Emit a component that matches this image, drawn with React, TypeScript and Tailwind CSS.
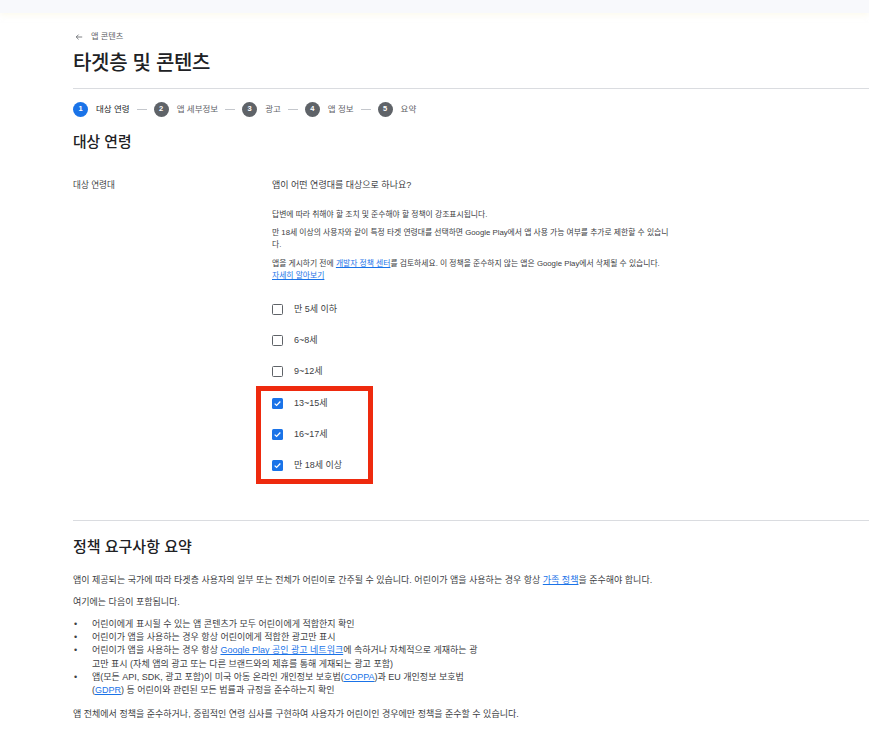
import React from 'react';

const steps = ['대상 연령', '앱 세부정보', '광고', '앱 정보', '요약'];

const ageGroups = [
    { label: '만 5세 이하', checked: false },
    { label: '6~8세', checked: false },
    { label: '9~12세', checked: false },
    { label: '13~15세', checked: true },
    { label: '16~17세', checked: true },
    { label: '만 18세 이상', checked: true },
];

const Checkbox = ({ label, checked }: { label: string; checked: boolean }) => (
    <div className="flex h-[24px] items-center">
        {checked ? (
            <span className="flex h-[11px] w-[11px] items-center justify-center rounded-[1.5px] bg-[#1a73e8]">
                <svg viewBox="0 0 12 12" className="h-[9px] w-[9px]">
                    <path d="M2.2 6.2 L4.8 8.6 L9.8 3.4" fill="none" stroke="white" strokeWidth="1.7" />
                </svg>
            </span>
        ) : (
            <span className="h-[11px] w-[11px] rounded-[1.5px] border-[1.3px] border-[#5f6368] bg-white" />
        )}
        <span className="ml-[11px] text-[9px] leading-[12px] text-[#3c4043]">{label}</span>
    </div>
);

const Link = ({ children }: { children: React.ReactNode }) => (
    <a className="text-[#1a73e8] underline underline-offset-[1px]">{children}</a>
);

export default function App() {
    return (
        <div
            className="min-h-[754px] w-[869px] bg-white text-[#202124]"
            style={{ fontFamily: '"Liberation Sans", "Noto Sans CJK KR", sans-serif' }}
        >
            <div className="h-[13px] bg-[#f8f9fc] shadow-[0_2px_6px_rgba(250,245,220,0.5)]" />

            <div className="pl-[73px]">
                {/* breadcrumb */}
                <div className="mt-[18px] flex h-[12px] items-center gap-[8px] text-[#5f6368]">
                    <svg viewBox="0 0 10 10" className="ml-[2px] h-[8px] w-[8px]">
                        <path d="M9 5 H1.5 M4.5 2 L1.5 5 L4.5 8" fill="none" stroke="#5f6368" strokeWidth="1" />
                    </svg>
                    <span className="text-[8.2px] leading-[12px]">앱 콘텐츠</span>
                </div>

                <h1 className="mt-[8px] text-[20px] font-medium leading-[24px] tracking-[-0.3px] text-[#202124]">
                    타겟층 및 콘텐츠
                </h1>

                <div className="mt-[13px] border-t border-[#dadce0]" />

                {/* stepper */}
                <div className="mt-[12px] flex h-[16px] items-center">
                    {steps.map((s, i) => (
                        <React.Fragment key={s}>
                            {i > 0 && <span className="mx-[7px] h-px w-[10px] bg-[#c4c7cc]" />}
                            <span
                                className={`flex h-[15px] w-[15px] items-center justify-center rounded-full text-[7.5px] font-bold text-white ${
                                    i === 0 ? 'bg-[#1a73e8]' : 'bg-[#5f6368]'
                                }`}
                            >
                                {i + 1}
                            </span>
                            <span
                                className={`ml-[8px] text-[8.5px] leading-[12px] ${
                                    i === 0 ? 'text-[#202124]' : 'text-[#5f6368]'
                                }`}
                            >
                                {s}
                            </span>
                        </React.Fragment>
                    ))}
                </div>

                <h2 className="mt-[15px] text-[14.8px] font-medium leading-[20px] text-[#202124]">대상 연령</h2>

                {/* target age row */}
                <div className="mt-[27px] flex">
                    <div className="w-[199px] text-[8.6px] leading-[12px] text-[#3c4043]">대상 연령대</div>
                    <div className="w-[420px] text-[#3c4043]">
                        <p className="text-[9px] leading-[12px] text-[#3c4043]">앱이 어떤 연령대를 대상으로 하나요?</p>
                        <p className="mt-[18px] text-[7.8px] leading-[12px]">
                            답변에 따라 취해야 할 조치 및 준수해야 할 정책이 강조표시됩니다.
                        </p>
                        <p className="mt-[6px] text-[7.8px] leading-[12px]">
                            만 18세 이상의 사용자와 같이 특정 타겟 연령대를 선택하면 Google Play에서 앱 사용 가능 여부를 추가로 제한할 수 있습니
                            <br />
                            다.
                        </p>
                        <p className="mt-[7px] text-[7.8px] leading-[12px]">
                            앱을 게시하기 전에 <Link>개발자 정책 센터</Link>를 검토하세요. 이 정책을 준수하지 않는 앱은 Google Play에서 삭제될 수 있습니다.
                            <br />
                            <Link>자세히 알아보기</Link>
                        </p>

                        <div className="mt-[15px] flex flex-col gap-[7px]">
                            {ageGroups.slice(0, 3).map((a) => (
                                <Checkbox key={a.label} {...a} />
                            ))}
                        </div>
                        <div className="-ml-[16px] mt-[3px] flex w-[117px] flex-col gap-[7px] border-[5px] border-[#ee2a0e] pb-[2px] pl-[11px]">
                            {ageGroups.slice(3).map((a) => (
                                <Checkbox key={a.label} {...a} />
                            ))}
                        </div>
                    </div>
                </div>

                <div className="mt-[36px] border-t border-[#dadce0]" />

                {/* policy summary */}
                <h2 className="mt-[15px] text-[15px] font-medium leading-[22px] text-[#202124]">정책 요구사항 요약</h2>
                <div className="text-[9px] text-[#3c4043]">
                    <p className="mt-[16px] leading-[12px]">
                        앱이 제공되는 국가에 따라 타겟층 사용자의 일부 또는 전체가 어린이로 간주될 수 있습니다. 어린이가 앱을 사용하는 경우 항상 <Link>가족 정책</Link>을 준수해야 합니다.
                    </p>
                    <p className="mt-[10px] leading-[12px]">여기에는 다음이 포함됩니다.</p>
                    <ul className="mt-[10px] leading-[13.2px]">
                        <li className="flex">
                            <span className="w-[19px] pl-[1px]">•</span>
                            <span>어린이에게 표시될 수 있는 앱 콘텐츠가 모두 어린이에게 적합한지 확인</span>
                        </li>
                        <li className="flex">
                            <span className="w-[19px] pl-[1px]">•</span>
                            <span>어린이가 앱을 사용하는 경우 항상 어린이에게 적합한 광고만 표시</span>
                        </li>
                        <li className="flex">
                            <span className="w-[19px] pl-[1px]">•</span>
                            <span>
                                어린이가 앱을 사용하는 경우 항상 <Link>Google Play 공인 광고 네트워크</Link>에 속하거나 자체적으로 게재하는 광
                                <br />
                                고만 표시 (자체 앱의 광고 또는 다른 브랜드와의 제휴를 통해 게재되는 광고 포함)
                            </span>
                        </li>
                        <li className="flex">
                            <span className="w-[19px] pl-[1px]">•</span>
                            <span>
                                앱(모든 API, SDK, 광고 포함)이 미국 아동 온라인 개인정보 보호법(<Link>COPPA</Link>)과 EU 개인정보 보호법
                                <br />
                                (<Link>GDPR</Link>) 등 어린이와 관련된 모든 법률과 규정을 준수하는지 확인
                            </span>
                        </li>
                    </ul>
                    <p className="mt-[11px] leading-[12px]">
                        앱 전체에서 정책을 준수하거나, 중립적인 연령 심사를 구현하여 사용자가 어린이인 경우에만 정책을 준수할 수 있습니다.
                    </p>
                </div>
            </div>
        </div>
    );
}
